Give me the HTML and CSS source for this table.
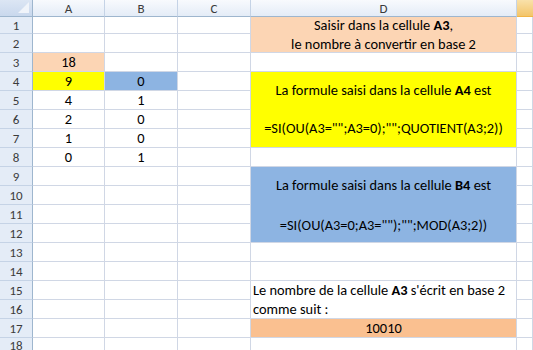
FILE: index.html
```html
<!DOCTYPE html>
<html lang="fr">
<head>
<meta charset="utf-8">
<title>Conversion en base 2</title>
<link rel="stylesheet" href="styles.css">
</head>
<body>
<div class="sheet">
  <div class="corner"><span class="tri"></span></div>
  <div class="ch">A</div>
  <div class="ch">B</div>
  <div class="ch">C</div>
  <div class="ch">D</div>
  <div class="ch sel"></div>

  <div class="rh">1</div><div class="c"></div><div class="c"></div><div class="c"></div>
  <div class="m peach d1"><p>Saisir dans la cellule <b>A3</b>,<br>le nombre à convertir en base 2</p></div>
  <div class="c"></div>

  <div class="rh">2</div><div class="c"></div><div class="c"></div><div class="c"></div><div class="c"></div>

  <div class="rh">3</div><div class="c num peach">18</div><div class="c"></div><div class="c"></div><div class="c"></div><div class="c"></div>

  <div class="rh">4</div><div class="c num yellow">9</div><div class="c num blue">0</div><div class="c"></div>
  <div class="m yellow d4"><p>La formule saisi dans la cellule <b>A4</b> est<br><br>=SI(OU(A3="";A3=0);"";QUOTIENT(A3;2))</p></div>
  <div class="c"></div>

  <div class="rh">5</div><div class="c num">4</div><div class="c num">1</div><div class="c"></div><div class="c"></div>
  <div class="rh">6</div><div class="c num">2</div><div class="c num">0</div><div class="c"></div><div class="c"></div>
  <div class="rh">7</div><div class="c num">1</div><div class="c num">0</div><div class="c"></div><div class="c"></div>
  <div class="rh">8</div><div class="c num">0</div><div class="c num">1</div><div class="c"></div><div class="c"></div><div class="c"></div>

  <div class="rh">9</div><div class="c"></div><div class="c"></div><div class="c"></div>
  <div class="m blue d9"><p>La formule saisi dans la cellule <b>B4</b> est<br><br>=SI(OU(A3=0;A3="");"";MOD(A3;2))</p></div>
  <div class="c"></div>

  <div class="rh">10</div><div class="c"></div><div class="c"></div><div class="c"></div><div class="c"></div>
  <div class="rh">11</div><div class="c"></div><div class="c"></div><div class="c"></div><div class="c"></div>
  <div class="rh">12</div><div class="c"></div><div class="c"></div><div class="c"></div><div class="c"></div>
  <div class="rh">13</div><div class="c"></div><div class="c"></div><div class="c"></div><div class="c"></div><div class="c"></div>
  <div class="rh">14</div><div class="c"></div><div class="c"></div><div class="c"></div><div class="c"></div><div class="c"></div>

  <div class="rh">15</div><div class="c"></div><div class="c"></div><div class="c"></div>
  <div class="m left d15"><p>Le nombre de la cellule <b>A3</b> s'écrit en base 2 comme suit :</p></div>
  <div class="c"></div>

  <div class="rh">16</div><div class="c"></div><div class="c"></div><div class="c"></div><div class="c"></div>

  <div class="rh">17</div><div class="c"></div><div class="c"></div><div class="c"></div><div class="c num peach2">10010</div><div class="c"></div>

  <div class="rh">18</div><div class="c"></div><div class="c"></div><div class="c"></div><div class="c"></div><div class="c"></div>
</div>
</body>
</html>
```
FILE: styles.css
```css
* { box-sizing: border-box; }
html, body { margin: 0; padding: 0; background: #fff; overflow: hidden; }
body { width: 533px; height: 350px; }

.sheet {
  display: grid;
  grid-template-columns: 33px 72px 73px 73px 266px 1fr;
  grid-template-rows: 17px 17px repeat(16, 19px);
  font-family: "Carlito", "Lato", "Liberation Sans", sans-serif;
  font-size: 14.4px;
  color: #000;
  width: 533px;
  height: 350px;
  overflow: hidden;
}

.corner {
  position: relative;
  background: linear-gradient(#dce6f4, #c9d8ed);
  border-right: 1px solid #9eb6ce;
  border-bottom: 1px solid #9eb6ce;
}
.tri {
  position: absolute;
  right: 3px; bottom: 3px;
  width: 0; height: 0;
  border-left: 11px solid transparent;
  border-bottom: 11px solid #f0f4fa;
}

.ch {
  background: linear-gradient(#f8fafd, #e4ecf7);
  border-right: 1px solid #c5d3e6;
  border-bottom: 1px solid #9eb6ce;
  color: #3b3b3b;
  font-size: 13px;
  display: flex;
  align-items: center;
  justify-content: center;
}
.ch.sel {
  background: linear-gradient(#f9e1aa, #f3c56a);
  border-bottom-color: #f2b545;
  border-right: none;
}

.rh {
  background: #e4ecf7;
  border-right: 1px solid #9eb6ce;
  border-bottom: 1px solid #c5d3e6;
  color: #3b3b3b;
  font-size: 13px;
  display: flex;
  align-items: center;
  justify-content: center;
}

.c {
  border-right: 1px solid #d0d7e5;
  border-bottom: 1px solid #d0d7e5;
}
.num {
  display: flex;
  align-items: center;
  justify-content: center;
}

.m {
  grid-column: 5;
  border-right: 1px solid #d0d7e5;
  border-bottom: 1px solid #d0d7e5;
  display: flex;
  align-items: center;
  justify-content: center;
  text-align: center;
  line-height: 19px;
}
.m p { margin: 0; }
.d1 { grid-row: 2 / span 2; }
.d4 { grid-row: 5 / span 4; }
.d9 { grid-row: 10 / span 4; line-height: 20px; }
.d15 {
  grid-row: 16 / span 2;
  justify-content: flex-start;
  text-align: left;
  padding: 0 2px;
}

.peach { background: #fcd5b4; }
.peach2 { background: #fac090; }
.yellow { background: #ffff00; }
.blue { background: #8db4e2; }
b { font-weight: bold; }
```
